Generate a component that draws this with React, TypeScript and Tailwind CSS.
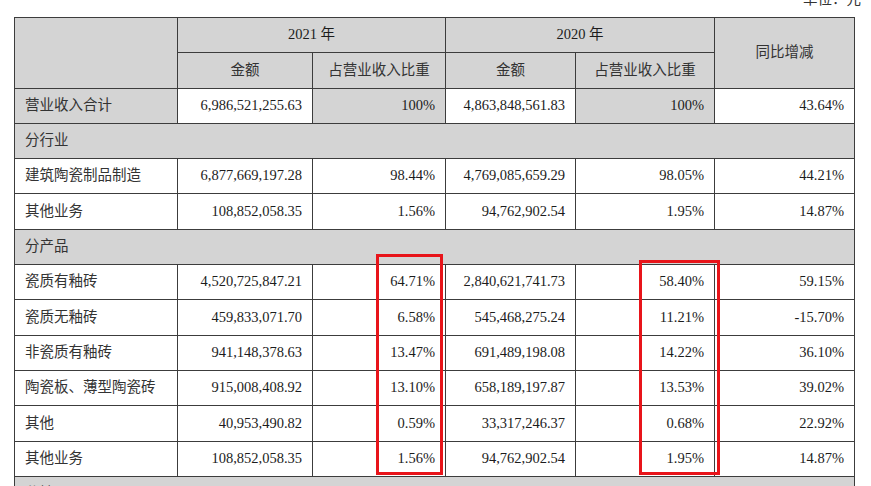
import React from "react";

type Row = {
  name: string;
  a21?: string;
  p21?: string;
  a20?: string;
  p20?: string;
  yoy?: string;
  section?: boolean;
  total?: boolean;
};

const rows: Row[] = [
  {
    name: "营业收入合计",
    a21: "6,986,521,255.63",
    p21: "100%",
    a20: "4,863,848,561.83",
    p20: "100%",
    yoy: "43.64%",
    total: true,
  },
  { name: "分行业", section: true },
  {
    name: "建筑陶瓷制品制造",
    a21: "6,877,669,197.28",
    p21: "98.44%",
    a20: "4,769,085,659.29",
    p20: "98.05%",
    yoy: "44.21%",
  },
  {
    name: "其他业务",
    a21: "108,852,058.35",
    p21: "1.56%",
    a20: "94,762,902.54",
    p20: "1.95%",
    yoy: "14.87%",
  },
  { name: "分产品", section: true },
  {
    name: "瓷质有釉砖",
    a21: "4,520,725,847.21",
    p21: "64.71%",
    a20: "2,840,621,741.73",
    p20: "58.40%",
    yoy: "59.15%",
  },
  {
    name: "瓷质无釉砖",
    a21: "459,833,071.70",
    p21: "6.58%",
    a20: "545,468,275.24",
    p20: "11.21%",
    yoy: "-15.70%",
  },
  {
    name: "非瓷质有釉砖",
    a21: "941,148,378.63",
    p21: "13.47%",
    a20: "691,489,198.08",
    p20: "14.22%",
    yoy: "36.10%",
  },
  {
    name: "陶瓷板、薄型陶瓷砖",
    a21: "915,008,408.92",
    p21: "13.10%",
    a20: "658,189,197.87",
    p20: "13.53%",
    yoy: "39.02%",
  },
  {
    name: "其他",
    a21: "40,953,490.82",
    p21: "0.59%",
    a20: "33,317,246.37",
    p20: "0.68%",
    yoy: "22.92%",
  },
  {
    name: "其他业务",
    a21: "108,852,058.35",
    p21: "1.56%",
    a20: "94,762,902.54",
    p20: "1.95%",
    yoy: "14.87%",
  },
  { name: "分地区", section: true },
];

const font = '"Liberation Serif", "Noto Sans CJK SC", serif';

const cell = "border border-[#3c3c3c] h-[35.3px] px-[10px] py-0 align-middle";
const gray = "bg-[#d4d4d4]";

export default function App() {
  return (
    <div
      className="w-[871px] h-[486px] overflow-hidden bg-white text-[#1c1c1c] text-[14.5px]"
      style={{ fontFamily: font }}
    >
      <div className="h-[17px] flex justify-end pr-[10px]">
        <span className="-mt-[11px] leading-[20px] text-[#333]">单位：元</span>
      </div>

      <div className="relative ml-[14px] w-[840px]">
        <table className="table-fixed border-collapse w-[840px]">
          <colgroup>
            <col className="w-[163px]" />
            <col className="w-[135px]" />
            <col className="w-[133px]" />
            <col className="w-[130px]" />
            <col className="w-[139px]" />
            <col className="w-[140px]" />
          </colgroup>
          <thead>
            <tr>
              <th rowSpan={2} className={`${cell} ${gray}`} />
              <th colSpan={2} className={`${cell} ${gray} font-normal text-center`}>
                2021 年
              </th>
              <th colSpan={2} className={`${cell} ${gray} font-normal text-center`}>
                2020 年
              </th>
              <th rowSpan={2} className={`${cell} ${gray} font-normal text-center text-[#333]`}>
                同比增减
              </th>
            </tr>
            <tr>
              <th className={`${cell} ${gray} font-normal text-center text-[#333]`}>金额</th>
              <th className={`${cell} ${gray} font-normal text-center text-[#333]`}>
                占营业收入比重
              </th>
              <th className={`${cell} ${gray} font-normal text-center text-[#333]`}>金额</th>
              <th className={`${cell} ${gray} font-normal text-center text-[#333]`}>
                占营业收入比重
              </th>
            </tr>
          </thead>
          <tbody>
            {rows.map((r, i) =>
              r.section ? (
                <tr key={i}>
                  <td colSpan={6} className={`${cell} ${gray} text-left text-[#333]`}>
                    {r.name}
                  </td>
                </tr>
              ) : (
                <tr key={i}>
                  <td className={`${cell} text-left text-[#333] ${r.total ? gray : ""}`}>
                    {r.name}
                  </td>
                  <td className={`${cell} text-right`}>{r.a21}</td>
                  <td className={`${cell} text-right ${r.total ? gray : ""}`}>{r.p21}</td>
                  <td className={`${cell} text-right`}>{r.a20}</td>
                  <td className={`${cell} text-right ${r.total ? gray : ""}`}>{r.p20}</td>
                  <td className={`${cell} text-right`}>{r.yoy}</td>
                </tr>
              )
            )}
          </tbody>
        </table>

        {/* red highlight boxes */}
        <div className="absolute left-[362px] top-[237px] w-[67px] h-[221px] border-[3px] border-[#e8141a]" />
        <div className="absolute left-[625px] top-[243px] w-[81px] h-[215px] border-[3px] border-[#e8141a]" />
      </div>
    </div>
  );
}
